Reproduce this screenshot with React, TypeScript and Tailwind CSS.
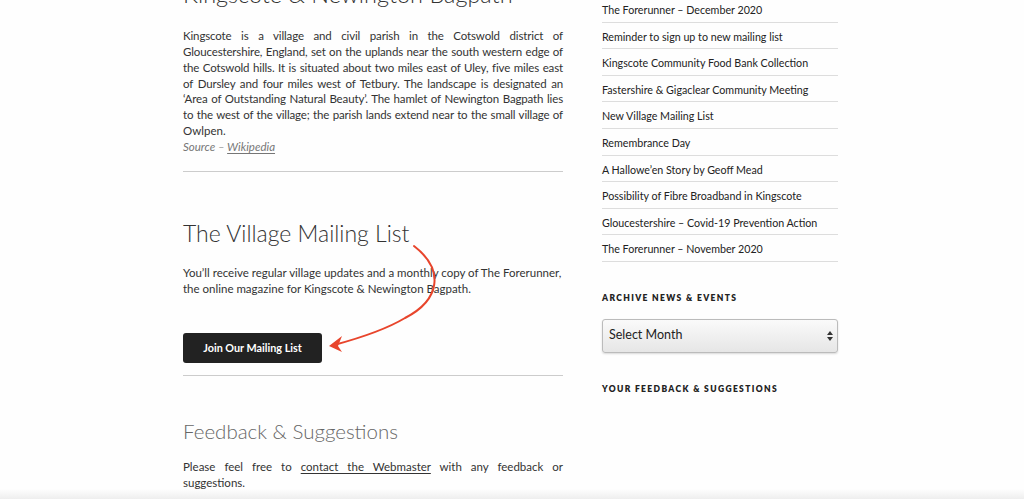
import React from 'react'

const recent = [
  'The Forerunner – December 2020',
  'Reminder to sign up to new mailing list',
  'Kingscote Community Food Bank Collection',
  'Fastershire & Gigaclear Community Meeting',
  'New Village Mailing List',
  'Remembrance Day',
  'A Hallowe’en Story by Geoff Mead',
  'Possibility of Fibre Broadband in Kingscote',
  'Gloucestershire – Covid-19 Prevention Action',
  'The Forerunner – November 2020',
]

// lines of the intro, each stretched to the column width like the justified original
const intro = [
  'Kingscote is a village and civil parish in the Cotswold district of',
  'Gloucestershire, England, set on the uplands near the south western edge of',
  'the Cotswold hills. It is situated about two miles east of Uley, five miles east',
  'of Dursley and four miles west of Tetbury. The landscape is designated an',
  '‘Area of Outstanding Natural Beauty’. The hamlet of Newington Bagpath lies',
  'to the west of the village; the parish lands extend near to the small village of',
]

export default function App() {
  return (
    <div
      className="relative w-[1024px] h-[499px] overflow-hidden bg-[#fefefe] text-[#333]"
      style={{ fontFamily: 'Lato, "Noto Sans", sans-serif' }}
    >
      <div className="flex gap-[39px] pl-[183px]">
        {/* main column */}
        <div className="w-[380px] flex flex-col">
          <h2 className="mt-[-21px] text-[23.5px] leading-[30px] font-light text-[#333] whitespace-nowrap">
            Kingscote &amp; Newington Bagpath
          </h2>
          <div className="mt-[19px] text-[11.5px] leading-[15.86px]">
            {intro.map((l) => (
              <span
                key={l}
                className="block text-justify [text-align-last:justify] whitespace-nowrap tracking-[-0.012em]"
              >
                {l}
              </span>
            ))}
            <span className="block">Owlpen.</span>
            <span className="block italic text-[#767676]">
              Source – <a className="underline underline-offset-2">Wikipedia</a>
            </span>
          </div>
          <div className="mt-[16px] h-px bg-[#ccc]" />

          <h2 className="mt-[47px] text-[23px] leading-[28px] font-light text-[#333]">The Village Mailing List</h2>
          <p className="mt-[18px] text-[11.5px] leading-[15.8px]">
            You’ll receive regular village updates and a monthly copy of The Forerunner, the online magazine for
            Kingscote &amp; Newington Bagpath.
          </p>
          <div className="mt-[37px]">
            <button className="h-[30px] w-[139px] rounded-[3px] bg-[#222] text-white text-[10.8px] font-bold">
              Join Our Mailing List
            </button>
          </div>
          <div className="mt-[12px] h-px bg-[#ccc]" />

          <h2 className="mt-[42px] text-[20.5px] leading-[26px] font-light text-[#666]">Feedback &amp; Suggestions</h2>
          <div className="mt-[15px] text-[11.5px] leading-[15.8px]">
            <span className="block text-justify [text-align-last:justify]">
              Please feel free to <a className="underline underline-offset-2">contact the Webmaster</a> with any
              feedback or
            </span>
            <span className="block">suggestions.</span>
          </div>
        </div>

        {/* sidebar */}
        <div className="w-[236px] flex flex-col">
          <ul className="mt-[-4px] text-[10.7px] text-[#222]">
            {recent.map((t) => (
              <li key={t} className="h-[26.6px] pt-[6px] border-b border-[#ddd] leading-[15px]">
                {t}
              </li>
            ))}
          </ul>
          <h3 className="mt-[30px] text-[8.5px] font-extrabold tracking-[0.16em] text-[#222]">
            ARCHIVE NEWS &amp; EVENTS
          </h3>
          <div className="mt-[14px] h-[34px] rounded-[3px] border border-[#bbb] bg-gradient-to-b from-[#fafafa] to-[#e6e6e6] shadow-[0_1px_2px_rgba(0,0,0,0.15)] flex items-center justify-between pl-[6px] pr-[4px] text-[12.5px] text-[#222]">
            <span>Select Month</span>
            <svg width="6" height="10" viewBox="0 0 6 10">
              <path d="M0 4 L3 0 L6 4 Z M0 6 L3 10 L6 6 Z" fill="#333" />
            </svg>
          </div>
          <h3 className="mt-[30px] text-[8.5px] font-extrabold tracking-[0.16em] text-[#222]">
            YOUR FEEDBACK &amp; SUGGESTIONS
          </h3>
        </div>
      </div>

      {/* annotation arrow */}
      <svg className="absolute left-0 top-0 pointer-events-none" width="1024" height="499">
        <path
          d="M414 246 C 445 270, 440 300, 405 318 C 385 330, 360 338, 334 345"
          fill="none"
          stroke="#e8452c"
          strokeWidth="2"
          strokeLinecap="round"
        />
        <path d="M329 346 L342 336 L338 346 L342 352 Z" fill="#e8452c" />
      </svg>

      <div className="absolute bottom-0 left-0 right-0 h-[10px] bg-gradient-to-b from-transparent to-[#eee]" />
    </div>
  )
}
